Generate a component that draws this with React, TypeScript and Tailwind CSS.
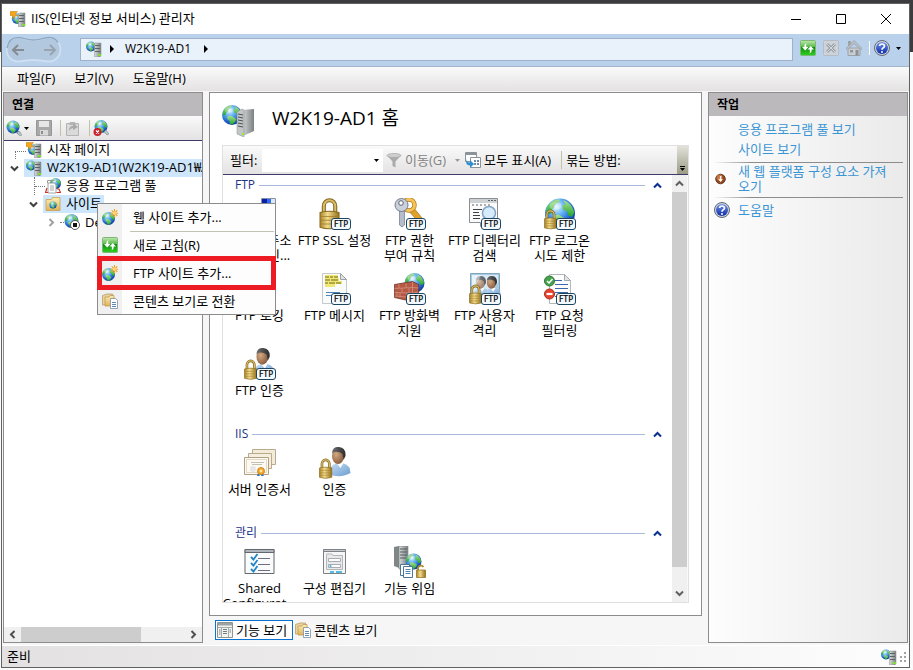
import React, { useState } from "react";
import type { ReactNode } from "react";

/* ---------- drawing primitives ---------- */

function SharedDefs() {
  return (
    <svg className="absolute h-0 w-0" aria-hidden="true">
      <defs>
        <radialGradient id="sea" cx="0.38" cy="0.28" r="0.8">
          <stop offset="0" stopColor="#e4f5ff" />
          <stop offset="0.35" stopColor="#62b2f4" />
          <stop offset="0.7" stopColor="#1f5fcb" />
          <stop offset="1" stopColor="#0d2f8c" />
        </radialGradient>
        <linearGradient id="land" x1="0" y1="0" x2="0" y2="1">
          <stop offset="0" stopColor="#a9e08e" />
          <stop offset="1" stopColor="#1fa52b" />
        </linearGradient>
        <linearGradient id="gold" x1="0" y1="0" x2="1" y2="0">
          <stop offset="0" stopColor="#a9842c" />
          <stop offset="0.4" stopColor="#f3dc8c" />
          <stop offset="1" stopColor="#94701c" />
        </linearGradient>
        <linearGradient id="steel" x1="0" y1="0" x2="1" y2="0">
          <stop offset="0" stopColor="#d9dddd" />
          <stop offset="0.5" stopColor="#a9adae" />
          <stop offset="1" stopColor="#7b8082" />
        </linearGradient>
        <linearGradient id="folder" x1="0" y1="0" x2="0" y2="1">
          <stop offset="0" stopColor="#fdeeb5" />
          <stop offset="1" stopColor="#dfb25a" />
        </linearGradient>
        <linearGradient id="refresh" x1="0" y1="0" x2="0" y2="1">
          <stop offset="0" stopColor="#bfe9ae" />
          <stop offset="0.4" stopColor="#5dbb50" />
          <stop offset="0.45" stopColor="#0f8a12" />
          <stop offset="1" stopColor="#2fd21f" />
        </linearGradient>
        <linearGradient id="help" x1="0" y1="0" x2="0" y2="1">
          <stop offset="0" stopColor="#6f92e6" />
          <stop offset="1" stopColor="#0c2ca8" />
        </linearGradient>
        <radialGradient id="face" cx="0.35" cy="0.4" r="0.8">
          <stop offset="0" stopColor="#d2a883" />
          <stop offset="1" stopColor="#7a4a2c" />
        </radialGradient>
        <linearGradient id="hair" x1="0" y1="0" x2="1" y2="0">
          <stop offset="0" stopColor="#6e6e70" />
          <stop offset="1" stopColor="#2c2c2e" />
        </linearGradient>
        <linearGradient id="shirt" x1="0" y1="0" x2="1" y2="1">
          <stop offset="0" stopColor="#c9dff3" />
          <stop offset="1" stopColor="#6a9dd1" />
        </linearGradient>
      </defs>
    </svg>
  );
}

function Globe({ x, y, r }: { x: number; y: number; r: number }) {
  return (
    <g transform={`translate(${x} ${y}) scale(${r / 10})`}>
      <circle r="10" fill="url(#sea)" />
      <path d="M-8.6-4.5C-6.5-8-3-9.6 0-9.4l-1 2.2-2.4 1.2-.8 2.5-2.2 1.8L-6-.2l-2.3.9-1-2.2z" fill="url(#land)" />
      <path d="M2.2-8.8C6-7.7 8.8-4.5 9.5-.6L8 2.2 5.6 1.3 4.8-1.5 2-2.6 1.6-5.3 3.6-6.2z" fill="url(#land)" />
      <path d="M-4.4 1.3-.8.8l3.2 2 2 1.4-1.6 3-2.4 2.3-2.4-.6-.6-3.4-2.3-1.6z" fill="url(#land)" />
      <ellipse cx="-3" cy="-5" rx="4" ry="2.6" fill="#fff" opacity="0.3" />
    </g>
  );
}

function Lock({ x, y, s = 1 }: { x: number; y: number; s?: number }) {
  return (
    <g transform={`translate(${x} ${y}) scale(${s})`}>
      <path d="M3 12V6.5a4.5 4.8 0 0 1 9 0V12" fill="none" stroke="#80651f" strokeWidth="3.2" />
      <path d="M3 12V6.5a4.5 4.8 0 0 1 9 0V12" fill="none" stroke="#d9bd68" strokeWidth="1.6" />
      <path d="M0 11.5Q7.5 9.5 15 11.5V23Q7.5 25.5 0 23z" fill="url(#gold)" stroke="#8a6a1d" strokeWidth="0.8" />
      <path d="M.5 14.5h14M.5 17.5h14M.5 20.5h14" stroke="#a27f2a" strokeWidth="0.8" opacity="0.8" />
    </g>
  );
}

function Badge() {
  return (
    <g>
      <rect x="12.5" y="20.5" width="19" height="11" rx="2.5" fill="#f2faff" stroke="#1d4460" />
      <text x="22" y="29" textAnchor="middle" fontSize="8" stroke="#000" strokeWidth="0.2" fontFamily="DejaVu Sans" fill="#000">
        FTP
      </text>
    </g>
  );
}

function Person({ x, y, s = 1 }: { x: number; y: number; s?: number }) {
  return (
    <g transform={`translate(${x} ${y}) scale(${s})`}>
      <path d="M0 28Q-1 18 7 16.500l6-.5q8 2 8 10-8 5-21 2z" fill="url(#shirt)" />
      <path d="M7 16l4 5 3-5z" fill="#fff" />
      <ellipse cx="8.500" cy="9" rx="6" ry="8" fill="url(#face)" />
      <path d="M2.500 6Q3-.5 9.500 0q7 .5 6.500 9l-2 4-1-6Q8 3 2.500 6z" fill="url(#hair)" />
    </g>
  );
}

function Svg({ size, children }: { size: 16 | 32; children: ReactNode }) {
  return (
    <svg
      className={size === 16 ? "h-4 w-4 shrink-0" : "h-8 w-8 shrink-0"}
      viewBox={`0 0 ${size} ${size}`}
      aria-hidden="true"
    >
      {children}
    </svg>
  );
}

function Tower() {
  return (
    <g>
      <path d="M9 2h6v12.500L14 16H8.500V3z" fill="url(#steel)" stroke="#878d8f" strokeWidth="0.500" />
      <path d="M9 4.500h5M9 7.500h5M9 10.500h5" stroke="#5d6467" strokeWidth="1" />
      <rect x="12" y="13" width="3" height="2" fill="#7ee02c" />
    </g>
  );
}

const ServerSmall = () => (
  <Svg size={16}>
    <Globe x={5} y={5.5} r={5} />
    <Tower />
  </Svg>
);

const StartPageIcon = () => (
  <Svg size={16}>
    <Globe x={7} y={7.500} r={5.2} />
    <path d="M0 4.500V.5h7.500L5.500 3 8 5 5.500 4.500 4 8 2.500 4.500z" fill="#f4a51c" stroke="#c4790d" strokeWidth="0.5" />
    <Tower />
  </Svg>
);

const ServerLarge = () => (
  <Svg size={32}>
    <Globe x={10} y={10} r={10} />
    <path d="M20 5l12-1v22l-11 5z" fill="url(#steel)" />
    <path d="M15 7l5-3 2 1v27l-7-3z" fill="#c2c6c7" stroke="#868b8d" strokeWidth="0.5" />
    <path d="M16 9l5 1M16 12l5 1M16 15l5 1M16 18l5 1M16 21l5 1" stroke="#4c5254" />
    <rect x="20" y="28" width="2" height="2" fill="#8cf02c" />
  </Svg>
);

const RefreshIcon = () => (
  <Svg size={16}>
    <rect x="0.500" y="0.500" width="15" height="15" rx="1" fill="url(#refresh)" stroke="#7cb877" />
    <path d="M6.500 3Q4 4 4.200 7H2l3.200 3.500L8.500 7H6.300Q5.800 5 6.500 3z" fill="#fff" />
    <path d="M9.500 13.500Q12 12.500 11.800 9.500H14L10.800 6 7.500 9.500H9.700Q10.200 11.500 9.500 13.500z" fill="#fff" />
  </Svg>
);

const StopIcon = () => (
  <Svg size={16}>
    <rect x="0.500" y="0.500" width="15" height="15" rx="1" fill="#ced3d9" stroke="#b5bcc4" />
    <path d="M4 4l8 8M12 4l-8 8" stroke="#9aa1a8" strokeWidth="3" />
    <path d="M4 4l8 8M12 4l-8 8" stroke="#d3d8dc" />
  </Svg>
);

const HomeIcon = () => (
  <Svg size={16}>
    <path d="M2 8h12v7.500H2z" fill="#c9cdd1" stroke="#9ba2a8" />
    <path d="M2 1h3v5H2z" fill="#9ca3a9" />
    <path d="M0 8.500L8 .5l8 8-1.500 1L8 3.500 1.500 9.500z" fill="#bcc2c7" stroke="#929aa0" strokeWidth="0.7" />
    <path d="M9.500 10h3v5.500h-3z" fill="#8a9298" />
    <path d="M4 10h3v2.500H4z" fill="#8f969c" />
  </Svg>
);

const HelpIcon = () => (
  <Svg size={16}>
    <circle cx="8" cy="8" r="7.500" fill="#d3d6da" stroke="#5e6778" />
    <circle cx="8" cy="8" r="6" fill="url(#help)" />
    <path d="M5.500 6Q5.800 4 8 4t2.500 2Q10.500 7.300 9 8q-1 .6-1 1.800" fill="none" stroke="#fff" strokeWidth="1.700" />
    <circle cx="8" cy="12" r="1" fill="#fff" />
  </Svg>
);

const InstallIcon = () => (
  <Svg size={16}>
    <rect x="1" y="1" width="13" height="13" fill="#fff" />
    <circle cx="7.500" cy="8" r="4.800" fill="#9c4717" stroke="#5e4334" />
    <circle cx="6.500" cy="6.500" r="3" fill="#e2935c" opacity="0.6" />
    <path d="M6.900 5h1.400v3.200H10L7.600 11 5.200 8.200h1.700z" fill="#fff" />
  </Svg>
);

const ConnectIcon = () => (
  <Svg size={16}>
    <path d="M9 10l5 4" stroke="#8fa0a4" strokeWidth="3" />
    <Globe x={7} y={7} r={6.5} />
    <path d="M11 13l2-2 3 4-2 1z" fill="#b8c6c8" stroke="#708084" strokeWidth="0.5" />
  </Svg>
);

const DisconnectIcon = () => (
  <Svg size={16}>
    <Globe x={8} y={6.500} r={6.5} />
    <path d="M11 12l2-2 3 4-2 1z" fill="#b8c6c8" stroke="#708084" strokeWidth="0.5" />
    <circle cx="4.500" cy="12" r="4" fill="#c8232a" />
    <path d="M3 10.500l3 3m0-3l-3 3" stroke="#fff" strokeWidth="1.300" />
  </Svg>
);

const SaveIcon = () => (
  <Svg size={16}>
    <path d="M.5.5h15v15H.5z" fill="#a8a8a8" stroke="#969696" />
    <path d="M3 1h10v6H3z" fill="#e6e6e6" />
    <path d="M4 10h8v5.500H4z" fill="#d9d9d9" />
    <path d="M5 11h2v3H5z" fill="#8f8f8f" />
  </Svg>
);

const PasteIcon = () => (
  <Svg size={16}>
    <path d="M1.500 3.500h12v12h-12z" fill="#dadada" stroke="#b3b3b3" />
    <path d="M5 2h5l1 3H4z" fill="#b5b5b5" />
    <path d="M4 11q0-5 4-5V3.500L13 7 8 10V8Q6 8 4 11z" fill="#a9a9a9" />
  </Svg>
);

const PoolIcon = () => (
  <Svg size={16}>
    <Globe x={10.500} y={5.500} r={5.5} />
    <path d="M2.500 5V2.500h7" fill="none" stroke="#9a9a9a" />
    <path d="M3 5h6.500l1.500 2v8H3z" fill="#fff" stroke="#8b8b8b" strokeWidth="0.8" />
    <path d="M5 8h4M5 10h4M5 12h4" stroke="#8a9096" strokeWidth="0.8" />
    <path d="M2 10l-1.500 4.500H3M12 11h2l1.500 3.500h-4" fill="none" stroke="#d0352b" strokeWidth="1.200" />
  </Svg>
);

const SitesIcon = () => (
  <Svg size={16}>
    <path d="M1 3.500h5.500l1-2H15v13H1z" fill="url(#folder)" stroke="#c99f4d" strokeWidth="0.8" />
    <Globe x={8} y={9} r={3.6} />
  </Svg>
);

const SiteStoppedIcon = () => (
  <Svg size={16}>
    <Globe x={7.500} y={7} r={7} />
    <circle cx="11" cy="11" r="4.500" fill="#fff" stroke="#555" />
    <path d="M9 9h4v4H9z" fill="#111" />
  </Svg>
);

const AddSiteIcon = () => (
  <Svg size={16}>
    <Globe x={6.500} y={9.500} r={6.5} />
    <path d="M12.500 0v8.500M8.500 4.200h7.500M9.700 1.300l5.600 5.700M15.300 1.300L9.700 7" stroke="#f0a52a" strokeWidth="1.100" />
    <circle cx="12.500" cy="4.200" r="1.600" fill="#ffd978" />
  </Svg>
);

const ContentIcon = () => (
  <Svg size={16}>
    <path d="M.5 2.500L5 1h5.500v11H.5z" fill="#e6d2a3" stroke="#b79e64" strokeWidth="0.8" />
    <path d="M3 4h4l1-1.500h4V13H3z" fill="url(#folder)" stroke="#c29b50" strokeWidth="0.8" />
    <path d="M8.500 5.500h5l2 2v8h-7z" fill="#fff" stroke="#7d8ea0" strokeWidth="0.8" />
    <path d="M10 9.500h4M10 11.500h4M10 13.500h4" stroke="#4b7fae" strokeWidth="0.9" />
  </Svg>
);

const FeaturesIcon = () => (
  <Svg size={16}>
    <path d="M.5.500h15v15H.5z" fill="#f3f4ef" stroke="#8d9496" />
    <path d="M1 1h14v2.500H1z" fill="#9ba3a5" />
    <path d="M4.500 5v10M11.500 5v10M1 5.500h14" stroke="#a5abab" />
    <path d="M2 8h1.500M2 10h1.500M2 12h1.500M6 7.500h4M6 9.500h4M6 11.500h4M12.500 8H14M12.500 10H14" stroke="#747c7e" />
  </Svg>
);

const FunnelIcon = () => (
  <Svg size={16}>
    <path d="M1 3.500l5.500 6V14l3 1.500v-6l5.500-6z" fill="#ababab" />
    <ellipse cx="8" cy="3.500" rx="7" ry="2" fill="#cfcfcf" stroke="#a3a3a3" strokeWidth="0.7" />
  </Svg>
);

const ShowAllIcon = () => (
  <Svg size={16}>
    <path d="M.5.500h11v9H.5z" fill="#fff" stroke="#8b9399" />
    <path d="M.5.500h11V3H.5z" fill="#8b9399" />
    <path d="M5.500 5.500h10v10h-10z" fill="#fff" stroke="#8b9399" />
    <path d="M9 8h2v2H9zM12 8h2v2h-2zM9 11h2v2H9zM12 11h2v2h-2z" fill="#7286a5" />
    <path d="M1 6.500q0 4 4 4V8l4 4-4 4v-2.500Q0 13 1 6.500z" fill="#2e8fd0" />
  </Svg>
);

/* ---------- 32px feature icons ---------- */

const art: Record<string, ReactNode> = {
  ip: (
    <>
      <path d="M17.500.500h14v12h-14z" fill="#dfe6f5" stroke="#8792a5" />
      <path d="M18 1h5v4h-5z" fill="#0a1ea8" />
      <path d="M23 1h4v4h-4z" fill="#2f6cf0" />
      <Badge />
    </>
  ),
  ssl: (
    <>
      <Lock x={1} y={0} s={1.27} />
      <Badge />
    </>
  ),
  keys: (
    <>
      <path d="M19 9l9 11-2 4-5-4-7-8z" fill="#e0a02c" stroke="#a87315" strokeWidth="0.7" />
      <circle cx="15" cy="7" r="5.500" fill="none" stroke="#b87d17" strokeWidth="4.500" />
      <circle cx="15" cy="7" r="5.500" fill="none" stroke="#f4c45c" strokeWidth="3" />
      <path d="M5.500 12h5v15L8 29l-2.500-2z" fill="#b6bdca" stroke="#6f7788" strokeWidth="0.7" />
      <circle cx="7.500" cy="7" r="6.500" fill="#cbd1db" stroke="#747c8d" />
      <circle cx="7" cy="5" r="2.300" fill="#fff" stroke="#5a6172" />
      <Badge />
    </>
  ),
  browse: (
    <>
      <path d="M.5.500h28v24h-13l-4 4v-4H.5z" fill="#fbfbfb" stroke="#8b8f93" />
      <path d="M1 1h27v4H1z" fill="#cfd2d4" />
      <path d="M19 2.500h2m1 0h2m1 0h2M3 7h2m2 0h2m2 0h2m2 0h2m2 0h2" stroke="#5f6468" />
      <path d="M4 11.500h9M4 14.500h6M4 17.500h7M4 20.500h7" stroke="#3d4246" />
      <circle cx="20" cy="15" r="6.500" fill="#d6ebfb" stroke="#86a5c4" strokeWidth="1.500" />
      <Badge />
    </>
  ),
  logon: (
    <>
      <Globe x={16} y={15.500} r={15} />
      <Lock x={0.500} y={11.500} s={0.8} />
      <Badge />
    </>
  ),
  log: (
    <>
      <path d="M4.500.500h18l5 5v26h-23z" fill="#fff" stroke="#999" />
      <Badge />
    </>
  ),
  message: (
    <>
      <path d="M3.500.500h18l6 6v24h-24z" fill="#fafbfb" stroke="#c6c9cb" />
      <path d="M21.500.500v6h6z" fill="#dfe2e4" stroke="#9da1a4" />
      <path d="M6 3.500h13M6 6.500h14M6 9.500h17M6 12.500h10" stroke="#f0e873" strokeWidth="3" />
      <path d="M6 4h4m1 0h3m1 0h4M6 7h5m1 0h7M6 10h3m1 0h6m1 0h5" stroke="#6c6614" />
      <path d="M7 19.500h14M7 22.500h6" stroke="#4d86bd" />
      <Badge />
    </>
  ),
  firewall: (
    <>
      <Globe x={20.500} y={10} r={10} />
      <path d="M.5 11.500l18-3 6 3v13l-6 4-18-4z" fill="#b65a45" stroke="#733326" strokeWidth="0.800" />
      <path
        d="M.5 15.500l18-1 6 .5M.5 19.500l18 .5 6-1M.5 23l18 1.500M5 11v4m7-5v5m-4 0v4m7-4v5m-9 0v4m7-4v4m5.500-15v20M3 19v4"
        stroke="#d59a87"
        strokeWidth="0.700"
        fill="none"
      />
      <Badge />
    </>
  ),
  isolation: (
    <>
      <path d="M1.500.500h29v24h-29z" fill="#a9cbe0" stroke="#7ea7be" />
      <path d="M3 2h26v8L14 24H3z" fill="#d8eaf7" />
      <g opacity="0.75">
        <Person x={5} y={3} s={0.75} />
      </g>
      <Person x={16} y={3} s={0.75} />
      <path d="M3 2h9L3 22z" fill="#fff" opacity="0.4" />
      <Lock x={0.500} y={11.500} s={0.8} />
      <Badge />
    </>
  ),
  filtering: (
    <>
      <path d="M5.500 1.500h15l6 6v23h-21z" fill="#fff" stroke="#b3b8bd" />
      <path d="M20.500 1.500v6h6z" fill="#e3e6e9" stroke="#a4a9ae" />
      <path d="M11 7.500h7M11 11.500h13M11 15.500h13M11 19.500h13M11 23.500h4" stroke="#3d67a8" />
      <circle cx="5.500" cy="8" r="5" fill="#47a24d" stroke="#2d7434" />
      <path d="M3 8l2 2 3.500-4" fill="none" stroke="#fff" strokeWidth="1.500" />
      <circle cx="5.500" cy="21" r="5" fill="#e5442f" stroke="#a92b1b" />
      <path d="M2.500 21h6" stroke="#fff" strokeWidth="2.200" />
      <Badge />
    </>
  ),
  ftpauth: (
    <>
      <Person x={10} y={0} s={0.98} />
      <Lock x={0.500} y={11.500} s={0.82} />
      <Badge />
    </>
  ),
  auth: (
    <>
      <Person x={10.500} y={0} s={1} />
      <Lock x={0.500} y={11.500} s={0.82} />
    </>
  ),
  cert: (
    <>
      <path d="M8.500 2.500h23v15h-23z" fill="#f3ebd9" stroke="#b9aa8e" />
      <path d="M4.500 6.500h23v15h-23z" fill="#f5eede" stroke="#b9aa8e" />
      <path d="M.5 10.500h24v17H.5z" fill="#fdfaf3" stroke="#b09f82" />
      <path d="M2.500 12.500h20v13h-20z" fill="none" stroke="#e3d9c4" />
      <path d="M7 15.500h13M8 17.500h10" stroke="#c6c0b3" />
      <circle cx="9" cy="22" r="3" fill="#e6e6e6" />
      <path d="M14 26l-1 3h3zm4 0l2 3h-3z" fill="#2f6fd0" />
      <circle cx="17" cy="24" r="3.500" fill="#f2a82b" stroke="#c57c10" strokeWidth="0.800" />
      <circle cx="17" cy="24" r="1.400" fill="#ffe6a3" />
    </>
  ),
  shared: (
    <>
      <path d="M1 3.500h29v24H1z" fill="#fafbfc" stroke="#63686e" />
      <path d="M1 3.500h29v3H1z" fill="#b0b5bb" stroke="#63686e" />
      <path d="M14 12.500h12M14 18.500h12M14 24.500h12" stroke="#6f6f83" />
      <path d="M7 11l2.500 2.500 4-5.500M7 17l2.500 2.500 4-5.500M7 23l2.500 2.500 4-5.500" fill="none" stroke="#1f86c9" strokeWidth="1.800" />
    </>
  ),
  editor: (
    <>
      <path d="M4.500 3.500h22v24h-22z" fill="#f5f6f7" stroke="#7d8287" />
      <path d="M4.500 3.500h22v2h-22z" fill="#c6cacd" stroke="#7d8287" />
      <path d="M7.500 9.500v14h16v-14H14l-1-1.500H7.500z" fill="#e7e9ea" stroke="#b3b7ba" />
      <path d="M9.500 12.500h12v3h-12zM9.500 18.500h12v3h-12z" fill="#fff" stroke="#a9adb1" />
      <path d="M10.500 20h2M11 26h4m2 0h6" stroke="#20aadb" strokeWidth="1.400" />
    </>
  ),
  delegation: (
    <>
      <path d="M0 1l5-1v22l-5-2z" fill="#7f8688" />
      <path d="M5 0h9v23H5z" fill="url(#steel)" stroke="#7c8385" strokeWidth="0.600" />
      <path d="M6 3h7M6 6h7M6 9h7M6 12h7" stroke="#545b5d" />
      <Globe x={19.500} y={15.500} r={8} />
      <path d="M6.500 18.500h9v11h-9z" fill="#fff" stroke="#4f7795" />
      <path d="M9.500 20.500h9v11h-9z" fill="#fff" stroke="#4f7795" />
      <path d="M11.500 23.500h5M11.500 25.500h5M11.500 27.500h5" stroke="#4c84b4" />
      <path d="M24 24v-2a3 3 0 0 1 5.500-1" fill="none" stroke="#b38c22" strokeWidth="1.800" />
      <path d="M22.500 24h9v7.500h-9z" fill="url(#gold)" stroke="#8a6a1d" strokeWidth="0.700" />
    </>
  ),
};

/* ---------- small glyphs ---------- */

function Chevron({ dir, className }: { dir: "up" | "down" | "left" | "right"; className: string }) {
  const d = {
    up: "M1 6.500L4.500 3 8 6.500",
    down: "M1 2.500L4.500 6 8 2.500",
    left: "M6.500 1L3 4.500 6.500 8",
    right: "M2.500 1L6 4.500 2.500 8",
  }[dir];
  return (
    <svg className={`h-[9px] w-[9px] shrink-0 ${className}`} viewBox="0 0 9 9" aria-hidden="true">
      <path d={d} fill="none" stroke="currentColor" strokeWidth="2" />
    </svg>
  );
}

const Caret = ({ className = "text-black" }: { className?: string }) => (
  <svg className={`h-[3px] w-[5px] shrink-0 ${className}`} viewBox="0 0 5 3" aria-hidden="true">
    <path d="M0 0h5L2.500 3z" fill="currentColor" />
  </svg>
);

const Crumb = () => (
  <svg className="h-2 w-1 shrink-0" viewBox="0 0 4 8" aria-hidden="true">
    <path d="M0 0l4 4-4 4z" fill="#000" />
  </svg>
);

/* ---------- feature view ---------- */

type Feature = { icon: string; lines: string[] };
type Group = { title: string; items: Feature[] };

const groups: Group[] = [
  {
    title: "FTP",
    items: [
      { icon: "ip", lines: ["FTP IP 주소", "및 도메인..."] },
      { icon: "ssl", lines: ["FTP SSL 설정"] },
      { icon: "keys", lines: ["FTP 권한", "부여 규칙"] },
      { icon: "browse", lines: ["FTP 디렉터리", "검색"] },
      { icon: "logon", lines: ["FTP 로그온", "시도 제한"] },
      { icon: "log", lines: ["FTP 로깅"] },
      { icon: "message", lines: ["FTP 메시지"] },
      { icon: "firewall", lines: ["FTP 방화벽", "지원"] },
      { icon: "isolation", lines: ["FTP 사용자", "격리"] },
      { icon: "filtering", lines: ["FTP 요청", "필터링"] },
      { icon: "ftpauth", lines: ["FTP 인증"] },
    ],
  },
  {
    title: "IIS",
    items: [
      { icon: "cert", lines: ["서버 인증서"] },
      { icon: "auth", lines: ["인증"] },
    ],
  },
  {
    title: "관리",
    items: [
      { icon: "shared", lines: ["Shared", "Configurat..."] },
      { icon: "editor", lines: ["구성 편집기"] },
      { icon: "delegation", lines: ["기능 위임"] },
    ],
  },
];

function FeatureGroup({ title, items }: Group) {
  return (
    <section className="mb-[2px]">
      <div className="flex h-[18px] items-center gap-1 pr-[10px] pl-3">
        <h2 className="text-xs text-[#1e3287]">{title}</h2>
        <span className="h-px flex-1 bg-[#a9b8dd]" />
        <button type="button" aria-label={`${title} 접기`} className="ml-1 flex">
          <Chevron dir="up" className="text-[#0b2f91]" />
        </button>
      </div>
      <div className="-ml-px grid grid-cols-[repeat(5,75px)] pt-1">
        {items.map((item) => (
          <button
            key={item.icon}
            type="button"
            className="flex h-[75px] flex-col items-center gap-[3px] text-center leading-[15px] whitespace-nowrap"
          >
            <Svg size={32}>{art[item.icon]}</Svg>
            <span>
              {item.lines.map((line) => (
                <span key={line} className="block">
                  {line}
                </span>
              ))}
            </span>
          </button>
        ))}
      </div>
    </section>
  );
}

function HomePage() {
  const [filter, setFilter] = useState("");
  return (
    <main className="flex min-h-0 flex-1 flex-col border border-[#8c8c8c] bg-white p-3">
      <div className="flex h-10 shrink-0 items-start gap-[18px]">
        <ServerLarge />
        <h1 className="text-[19px] leading-[26px]">W2K19-AD1 홈</h1>
      </div>
      <div className="flex min-h-0 flex-1 flex-col border border-[#e0e0e0]">
        <div className="flex h-[29px] shrink-0 items-center border-b border-[#3e3b6b] bg-linear-to-b from-[#fafafa] to-[#e4e2e3]">
          <label htmlFor="filter" className="w-[39px] pl-[7px]">
            필터:
          </label>
          <div className="flex h-[23px] w-[121px] items-center bg-white">
            <input
              id="filter"
              value={filter}
              onChange={(e) => setFilter(e.target.value)}
              className="h-full min-w-0 flex-1 px-1 outline-none"
            />
            <button type="button" aria-label="필터 목록" className="flex w-[9px]">
              <Caret />
            </button>
          </div>
          <button type="button" className="ml-[3px] flex items-center gap-[3px] whitespace-nowrap text-[#838383]">
            <FunnelIcon />
            이동(G)
          </button>
          <button type="button" aria-label="이동 옵션" className="ml-[9px] flex">
            <Caret className="text-[#9a9a9a]" />
          </button>
          <button type="button" className="ml-[5px] flex items-center gap-[3px] whitespace-nowrap">
            <ShowAllIcon />
            모두 표시(A)
          </button>
          <span className="mr-1 ml-[10px] h-[18px] w-px bg-[#c2c2a9]" />
          <span className="whitespace-nowrap">묶는 방법:</span>
          <button
            type="button"
            aria-label="도구 모음 옵션"
            className="ml-auto flex h-full w-[11px] flex-col items-center justify-end gap-px bg-linear-to-b from-[#e2e2dc] to-[#9c9c84] pb-[3px]"
          >
            <span className="h-px w-[5px] bg-black" />
            <Caret />
          </button>
        </div>
        <div className="flex min-h-0 flex-1">
          <div className="min-w-0 flex-1 overflow-hidden pt-px">
            {groups.map((group) => (
              <FeatureGroup key={group.title} {...group} />
            ))}
          </div>
          <div className="flex w-4 flex-col items-center border-r border-[#f8f8f8] bg-[#f0f0f0]">
            <button type="button" aria-label="위로 스크롤" className="flex h-[17px] items-center">
              <Chevron dir="up" className="text-[#606060]" />
            </button>
            <div className="w-full flex-1 bg-[#cdcdcd]" />
            <button type="button" aria-label="아래로 스크롤" className="mt-[18px] flex h-[17px] items-center">
              <Chevron dir="down" className="text-[#606060]" />
            </button>
          </div>
        </div>
      </div>
    </main>
  );
}

/* ---------- connections ---------- */

const Dots = ({ className }: { className: string }) => (
  <span className={`shrink-0 border-dotted border-[#777] ${className}`} />
);

function ConnectionTree() {
  return (
    <ul role="tree" aria-label="연결" className="min-h-0 flex-1 overflow-hidden leading-[14px] whitespace-nowrap">
      <li role="treeitem" className="flex h-[18px] items-center pl-[11px]">
        <Dots className="h-2 w-[11px] self-end border-t border-l" />
        <StartPageIcon />
        <span className="ml-[5px] pb-[2px]">시작 페이지</span>
      </li>
      <li role="treeitem" aria-expanded="true">
        <div className="flex h-[18px] items-center">
          <button type="button" aria-label="접기" className="flex w-5 shrink-0 pl-[6px]">
            <Chevron dir="down" className="text-[#404040]" />
          </button>
          <span className="flex h-full min-w-0 flex-1 items-center gap-[5px] overflow-hidden bg-[#cde6fc] pl-[2px]">
            <ServerSmall />
            <span className="pb-[2px]">W2K19-AD1(W2K19-AD1₩Administrator)</span>
          </span>
        </div>
        <ul role="group">
          <li role="treeitem" className="flex h-[18px] items-center pl-[30px]">
            <Dots className="h-full w-px border-l" />
            <Dots className="w-[10px] border-t" />
            <PoolIcon />
            <span className="ml-[5px] pb-[2px]">응용 프로그램 풀</span>
          </li>
          <li role="treeitem" aria-expanded="true" aria-selected="true">
            <div className="flex h-[18px] items-center pl-[21px]">
              <button type="button" aria-label="접기" className="flex w-[18px] pl-1">
                <Chevron dir="down" className="text-[#404040]" />
              </button>
              <span className="flex h-full items-center gap-[5px] bg-[#cde6fc] px-[2px]">
                <SitesIcon />
                <span className="pb-[2px]">사이트</span>
              </span>
            </div>
            <ul role="group">
              <li role="treeitem" className="flex h-[18px] items-center pl-[43px]">
                <button type="button" aria-label="펼치기" className="flex w-[13px]">
                  <Chevron dir="right" className="text-[#a0a0a0]" />
                </button>
                <Dots className="w-1 border-t" />
                <SiteStoppedIcon />
                <span className="ml-[5px]">Default Web Site</span>
              </li>
            </ul>
          </li>
        </ul>
      </li>
    </ul>
  );
}

const Divider = () => <span className="h-4 w-px bg-[#c2c2a9]" />;

function Connections() {
  return (
    <aside className="flex w-[200px] shrink-0 flex-col border border-[#8c8c8c] bg-white">
      <h2 className="flex h-[23px] shrink-0 items-center bg-[#bcb9bc] pl-2 text-xs font-bold">연결</h2>
      <div className="flex h-[25px] shrink-0 items-center border-b border-[#3e3b6b] bg-linear-to-b from-[#fafafa] to-[#e4e2e3] pl-[2px]">
        <button type="button" aria-label="연결 만들기" className="flex items-center gap-[2px]">
          <ConnectIcon />
          <Caret />
        </button>
        <button type="button" aria-label="연결 저장" className="mr-2 ml-[7px]">
          <SaveIcon />
        </button>
        <Divider />
        <button type="button" aria-label="붙여넣기" className="mr-2 ml-1">
          <PasteIcon />
        </button>
        <Divider />
        <button type="button" aria-label="연결 끊기" className="ml-[3px]">
          <DisconnectIcon />
        </button>
      </div>
      <ConnectionTree />
      <div className="flex h-[15px] shrink-0 items-center bg-[#f0f0f0]">
        <button type="button" aria-label="왼쪽으로 스크롤" className="flex w-[17px] pl-1">
          <Chevron dir="left" className="text-[#505050]" />
        </button>
        <div className="h-full w-[120px] bg-[#cdcdcd]" />
        <button type="button" aria-label="오른쪽으로 스크롤" className="mr-1 ml-auto flex">
          <Chevron dir="right" className="text-[#505050]" />
        </button>
      </div>
    </aside>
  );
}

function ContextMenu() {
  const row = "flex h-7 w-full items-center gap-[15px] pb-[2px] pl-1 text-left whitespace-nowrap";
  return (
    <div
      role="menu"
      className="absolute top-[203px] left-[97px] w-[179px] border border-[#8c8c8c] bg-[linear-gradient(to_right,#f0f0f0_24px,#fdfdfd_24px)]"
    >
      <button type="button" role="menuitem" className={row}>
        <AddSiteIcon />웹 사이트 추가...
      </button>
      <div className="-mt-px mr-px ml-8 h-px bg-[#c2c2b4]" />
      <button type="button" role="menuitem" className={row}>
        <RefreshIcon />
        새로 고침(R)
      </button>
      <button type="button" role="menuitem" className={row}>
        <AddSiteIcon />
        FTP 사이트 추가...
      </button>
      <button
        type="button"
        role="menuitem"
        className="flex h-[26px] w-full items-center gap-[15px] pl-1 text-left whitespace-nowrap"
      >
        <ContentIcon />
        콘텐츠 보기로 전환
      </button>
      <div className="pointer-events-none absolute -inset-x-px top-[52px] h-[34px] border-5 border-[#ed1c24]" />
    </div>
  );
}

/* ---------- actions ---------- */

function Actions() {
  const rule = "h-px bg-linear-to-r from-transparent via-[#8c8c8c] via-20% to-[#8c8c8c]";
  return (
    <aside className="flex w-[200px] shrink-0 flex-col border border-[#8c8c8c] bg-linear-to-r from-[#fdfdfd] to-[#eaeaea]">
      <h2 className="flex h-[23px] shrink-0 items-center bg-[#bcb9bc] pl-2 text-xs font-bold">작업</h2>
      <nav className="px-1 pt-[3px] text-[#3a95d4]">
        <a href="#pools" className="block h-5 pl-[25px] leading-5 whitespace-nowrap">
          응용 프로그램 풀 보기
        </a>
        <a href="#sites" className="block h-[23px] pl-[25px] leading-5 whitespace-nowrap">
          사이트 보기
        </a>
        <div className={rule} />
        <a href="#install" className="flex h-[34px] items-center gap-[9px] pb-[2px] leading-[15px]">
          <InstallIcon />
          <span>
            새 웹 플랫폼 구성 요소 가져
            <br />
            오기
          </span>
        </a>
        <div className={rule} />
        <a href="#help" className="flex h-6 items-center gap-2 pl-px">
          <HelpIcon />
          도움말
        </a>
      </nav>
    </aside>
  );
}

/* ---------- window chrome ---------- */

function TitleBar() {
  return (
    <header className="flex h-[30px] shrink-0 items-center bg-white pl-2">
      <StartPageIcon />
      <span className="ml-[5px] flex-1 pb-[2px] whitespace-nowrap">IIS(인터넷 정보 서비스) 관리자</span>
      <button type="button" aria-label="최소화" className="flex w-[46px] justify-center">
        <svg className="h-[10px] w-[10px]" viewBox="0 0 10 10">
          <path d="M0 5.500h10" stroke="#000" />
        </svg>
      </button>
      <button type="button" aria-label="최대화" className="flex w-11 justify-center">
        <svg className="h-[10px] w-[10px]" viewBox="0 0 10 10">
          <path d="M.5.500h9v9h-9z" fill="none" stroke="#000" />
        </svg>
      </button>
      <button type="button" aria-label="닫기" className="flex w-[46px] justify-center">
        <svg className="h-[10px] w-[10px]" viewBox="0 0 10 10">
          <path d="M0 0l10 10M10 0L0 10" stroke="#000" />
        </svg>
      </button>
    </header>
  );
}

function AddressBar() {
  return (
    <div className="flex h-[33px] shrink-0 items-center border-b border-[#a3b5cc] bg-[#b9d1ea] pr-2 pb-[2px] pl-1">
      <svg className="h-[27px] w-[55px] shrink-0" viewBox="0 0 55 27" role="img" aria-label="뒤로 앞으로">
        <path
          d="M12 1.500C18 1.500 20 4 27.500 4S37 1.500 43 1.500a11.500 12 0 0 1 0 24c-6 0-8-1.500-15.500-1.500S18 25.500 12 25.500a11.500 12 0 0 1 0-24z"
          fill="#b1c8df"
          stroke="#cddff0"
          strokeWidth="2"
        />
        <path
          d="M1 12Q3 1.500 12 1.500C18 1.500 20 4 27.500 4S37 1.500 43 1.500q6 0 9 5"
          fill="none"
          stroke="#8fa8c4"
          strokeWidth="1.500"
        />
        <path d="M18 14H7.500M12 9l-5 5 5 5" fill="none" stroke="#858b91" strokeWidth="2" />
        <path d="M38 14h10.500M44 9l5 5-5 5" fill="none" stroke="#98a4b0" strokeWidth="2" />
      </svg>
      <nav
        aria-label="주소"
        className="ml-[19px] flex h-[23px] flex-1 items-center border border-[#9fb1c8] bg-[#e9f1fa] pl-[5px] text-xs"
      >
        <ServerSmall />
        <span className="mr-[11px] ml-2">
          <Crumb />
        </span>
        <a href="#server">W2K19-AD1</a>
        <span className="ml-[13px]">
          <Crumb />
        </span>
      </nav>
      <div className="ml-[7px] flex items-center gap-[7px] pb-[2px]">
        <button type="button" aria-label="새로 고침">
          <RefreshIcon />
        </button>
        <button type="button" aria-label="중지">
          <StopIcon />
        </button>
        <button type="button" aria-label="홈">
          <HomeIcon />
        </button>
        <span className="h-[14px] w-px bg-white" />
        <button type="button" aria-label="도움말" className="-ml-[3px] flex items-center gap-[6px]">
          <HelpIcon />
          <Caret />
        </button>
      </div>
    </div>
  );
}

export default function App() {
  return (
    <div className="relative h-screen w-full overflow-hidden bg-[linear-gradient(#3c3c3e_52px,#fafafa_52px)] pt-[3px] pr-[3px] pb-[2px] pl-px font-['Open_Sans','Noto_Sans_CJK_KR',sans-serif] text-[13px] leading-4 text-black">
      <SharedDefs />
      <div className="flex h-full flex-col border border-[#5f6163] bg-[#f6f6f6]">
        <TitleBar />
        <AddressBar />
        <div
          role="menubar"
          className="flex h-6 shrink-0 items-center gap-[19px] bg-linear-to-b from-[#fafafa] to-[#e4e2e3] pb-[2px] pl-[15px]"
        >
          <button type="button">파일(F)</button>
          <button type="button">보기(V)</button>
          <button type="button">도움말(H)</button>
        </div>
        <div className="flex min-h-0 flex-1 gap-[6px] px-px pt-px pb-[2px]">
          <Connections />
          <div className="flex min-w-0 flex-1 flex-col">
            <HomePage />
            <div className="flex h-[27px] shrink-0 items-center gap-[2px] pl-[6px]">
              <button
                type="button"
                className="flex h-5 items-center gap-[3px] border border-[#0a72d0] bg-white pr-[5px] pl-px whitespace-nowrap"
              >
                <FeaturesIcon />
                기능 보기
              </button>
              <button type="button" className="flex h-5 items-center gap-[3px] whitespace-nowrap">
                <ContentIcon />
                콘텐츠 보기
              </button>
            </div>
          </div>
          <Actions />
        </div>
        <footer className="flex h-[22px] shrink-0 items-center justify-between border-t border-white bg-linear-to-r from-[#e3e1e2] to-[#fdfdfd] pr-[2px] pl-[5px]">
          <span className="pb-px">준비</span>
          <div className="flex items-center">
            <ServerSmall />
            <svg className="h-3 w-[10px]" viewBox="0 0 10 12" aria-hidden="true">
              <path d="M7 1h2v2H7zM7 5h2v2H7zM7 9h2v2H7zM3 5h2v2H3zM3 9h2v2H3z" fill="#a3a3a3" />
            </svg>
          </div>
        </footer>
      </div>
      <ContextMenu />
    </div>
  );
}
